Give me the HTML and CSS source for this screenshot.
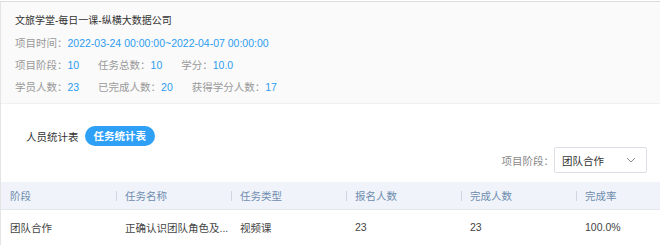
FILE: index.html
```html
<html><head>
    <link rel="stylesheet" href="styles.css">
</head><body>
    <div class="page">
        <div class="info">
            <div class="title">文旅学堂-每日一课-纵横大数据公司</div>
            <div class="row">
                <span class="item"><span class="label">项目时间：</span><span class="value">2022-03-24 00:00:00~2022-04-07 00:00:00</span></span>
            </div>
            <div class="row">
                <span class="item"><span class="label">项目阶段：</span><span class="value">10</span></span>
                <span class="item"><span class="label">任务总数：</span><span class="value">10</span></span>
                <span class="item"><span class="label">学分：</span><span class="value">10.0</span></span>
            </div>
            <div class="row">
                <span class="item"><span class="label">学员人数：</span><span class="value">23</span></span>
                <span class="item"><span class="label">已完成人数：</span><span class="value">20</span></span>
                <span class="item"><span class="label">获得学分人数：</span><span class="value">17</span></span>
            </div>
        </div>

        <div class="tabs">
            <span class="tab">人员统计表</span>
            <span class="tab active">任务统计表</span>
        </div>

        <div class="filter">
            <span class="filter-label">项目阶段：</span>
            <div class="select">
                <span>团队合作</span>
                <svg width="10" height="6" viewBox="0 0 10 6"><path d="M1 1 L5 5 L9 1" fill="none" stroke="#8c8c8c" stroke-width="1"/></svg>
            </div>
        </div>

        <table class="grid">
            <thead>
                <tr>
                    <th>阶段</th>
                    <th><i class="sep"></i>任务名称</th>
                    <th><i class="sep"></i>任务类型</th>
                    <th><i class="sep"></i>报名人数</th>
                    <th><i class="sep"></i>完成人数</th>
                    <th><i class="sep"></i>完成率</th>
                </tr>
            </thead>
            <tbody>
                <tr>
                    <td>团队合作</td>
                    <td>正确认识团队角色及...</td>
                    <td>视频课</td>
                    <td>23</td>
                    <td>23</td>
                    <td>100.0%</td>
                </tr>
            </tbody>
        </table>
    </div>
</body></html>
```

FILE: styles.css
```css
body {
    margin: 0;
    background: #fff;
    font-family: "Liberation Sans", "Noto Sans CJK SC", sans-serif;
    font-size: 10.5px;
    color: #333;
    overflow: hidden;
}

.page {
    margin-top: 1px;
    border-top: 1px solid #dcdcdc;
    border-left: 1px solid #e4e4e4;
    height: 250px;
}

.info {
    background: #fafafa;
    padding: 8px 14px 5px;
    border-bottom: 1px solid #f0f0f0;
}

.title {
    line-height: 22px;
    font-size: 10px;
    color: #333;
}

.row {
    line-height: 22px;
}

.item {
    margin-right: 16px;
}

.label {
    color: #999;
}

.value {
    color: #2d9cf0;
}

.tabs {
    display: flex;
    align-items: center;
    margin-top: 22px;
    padding-left: 25px;
    height: 20px;
}

.tab {
    margin-right: 6px;
    color: #333;
}

.tab.active {
    background: #2ea1f7;
    color: #fff;
    font-weight: bold;
    border-radius: 10px;
    padding: 0 9px;
    line-height: 20px;
}

.filter {
    display: flex;
    justify-content: flex-end;
    align-items: center;
    margin-top: 1px;
    padding-right: 13px;
}

.filter-label {
    color: #888;
}

.select {
    display: flex;
    align-items: center;
    justify-content: space-between;
    width: 74px;
    height: 24px;
    padding: 0 10px 0 7px;
    border: 1px solid #dcdfe6;
    border-radius: 2px;
    background: #fff;
    color: #333;
}

.grid {
    margin-top: 9px;
    border-collapse: collapse;
    table-layout: fixed;
    width: 690px;
    font: inherit;
}

.grid th, .grid td {
    width: 106px;
    text-align: left;
    padding: 0 0 0 9px;
    white-space: nowrap;
    overflow: hidden;
}

.grid th {
    height: 27px;
    background: #f0f4fa;
    color: #6f8cae;
    font-weight: normal;
    border-bottom: 1px solid #e3e8ef;
    position: relative;
}

.sep {
    position: absolute;
    left: 0;
    top: 9px;
    width: 1px;
    height: 10px;
    background: #cfd6df;
}

.grid td {
    height: 36px;
    color: #444;
}
```
